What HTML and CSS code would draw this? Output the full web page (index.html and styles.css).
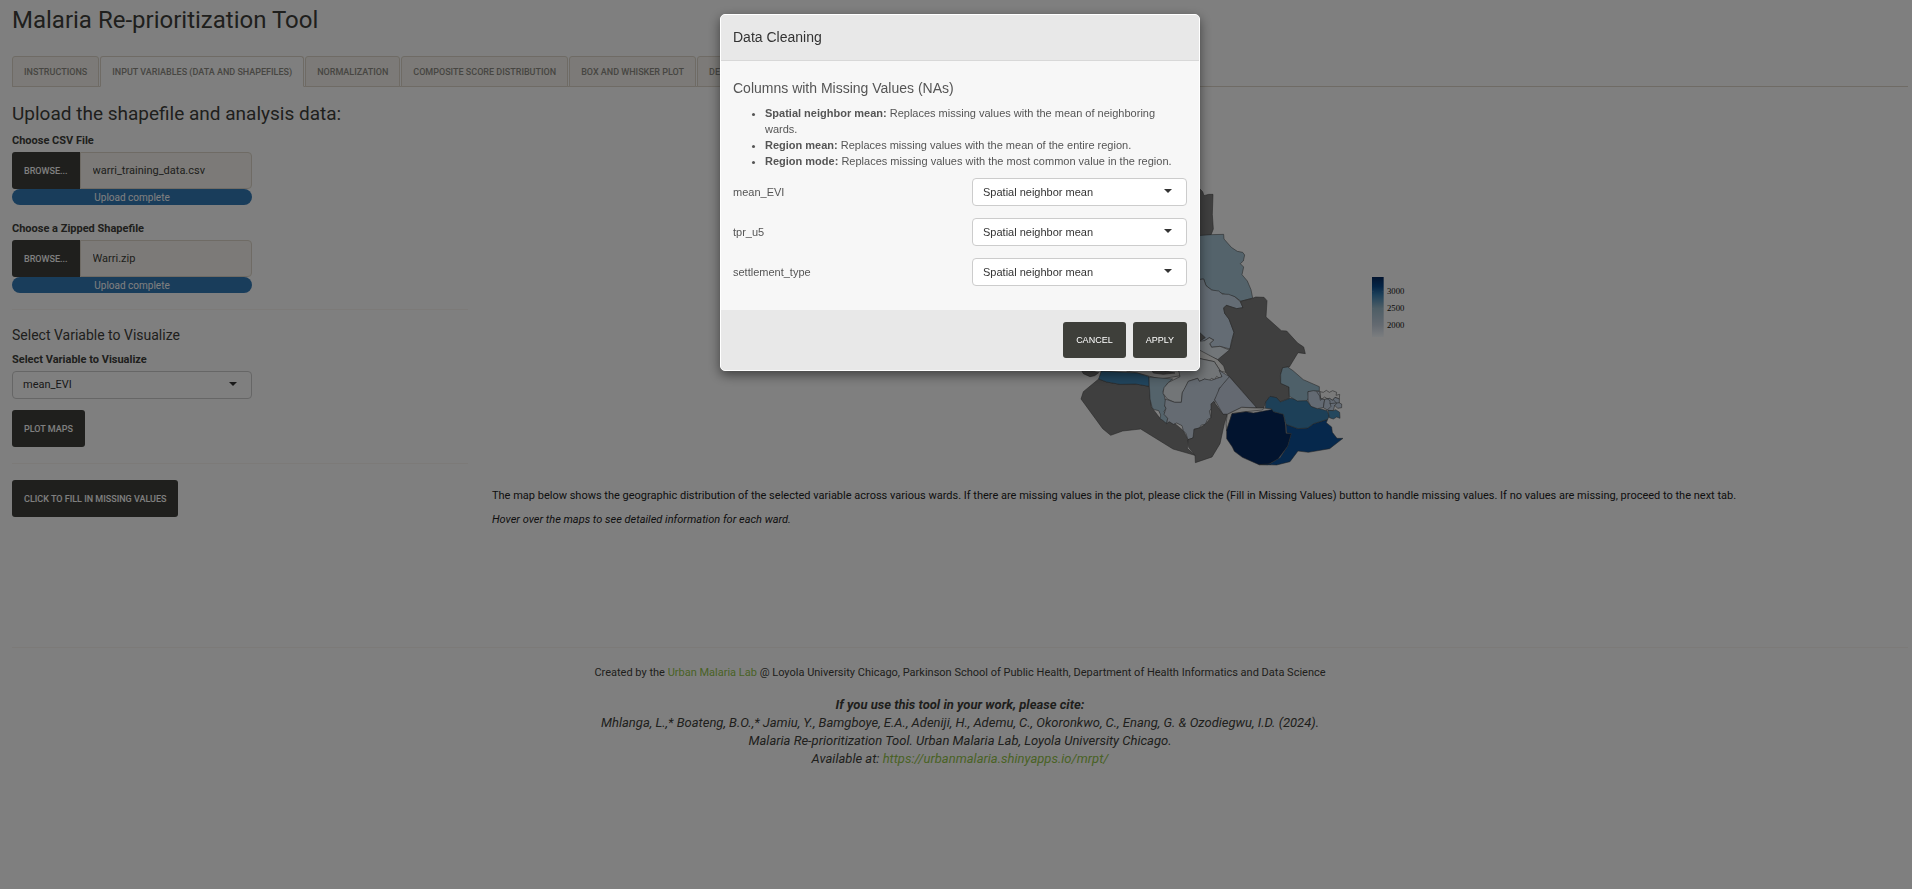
FILE: index.html
```html
<!DOCTYPE html>
<html lang="en">
<head>
<meta charset="utf-8">
<title>Malaria Re-prioritization Tool</title>
<link rel="stylesheet" href="styles.css">
</head>
<body>
<div class="page">
  <h1 class="title">Malaria Re-prioritization Tool</h1>
  <nav class="tabs">
    <a class="tab" href="#instructions">INSTRUCTIONS</a>
    <a class="tab active" href="#input">INPUT VARIABLES (DATA AND SHAPEFILES)</a>
    <a class="tab" href="#normalization">NORMALIZATION</a>
    <a class="tab" href="#composite">COMPOSITE SCORE DISTRIBUTION</a>
    <a class="tab" href="#box">BOX AND WHISKER PLOT</a>
    <a class="tab" href="#de">DE</a>
  </nav>
  <div class="columns">
    <section class="sidebar">
      <h2 class="section-title">Upload the shapefile and analysis data:</h2>
      <div class="upload">
        <label class="label" for="csv">Choose CSV File</label>
        <div class="file">
          <button class="btn browse" type="button">BROWSE...</button>
          <input class="file-name" id="csv" type="text" value="warri_training_data.csv" readonly>
        </div>
        <div class="progress">Upload complete</div>
      </div>
      <div class="upload">
        <label class="label" for="shp">Choose a Zipped Shapefile</label>
        <div class="file">
          <button class="btn browse" type="button">BROWSE...</button>
          <input class="file-name" id="shp" type="text" value="Warri.zip" readonly>
        </div>
        <div class="progress">Upload complete</div>
      </div>
      <hr class="rule">
      <h3 class="sub-title">Select Variable to Visualize</h3>
      <label class="label" for="variable">Select Variable to Visualize</label>
      <div class="picker narrow">
        <select class="select" id="variable"><option>mean_EVI</option></select>
      </div>
      <button class="btn" type="button">PLOT MAPS</button>
      <hr class="rule">
      <button class="btn" type="button">CLICK TO FILL IN MISSING VALUES</button>
    </section>
    <section class="main">
      <svg class="map" viewBox="0 0 1080 930" role="img" aria-label="Map of mean_EVI by ward">
        <defs>
          <linearGradient id="scale" x1="0" y1="0" x2="0" y2="1">
            <stop offset="0" stop-color="#06295f"/>
            <stop offset=".16" stop-color="#0a4a8c"/>
            <stop offset=".3" stop-color="#3c82b4"/>
            <stop offset=".52" stop-color="#9cbccc"/>
            <stop offset=".8" stop-color="#c8d4e2"/>
            <stop offset="1" stop-color="#f7fbff"/>
          </linearGradient>
        </defs>
        <g class="wards">
          <path fill="#7f7f7f" d="M380 60L420 54L428 62L432 74L446 70L459 70L457 130L460 174L453 192L380 200Z"/>
          <path fill="#a8c6d6" d="M380 196L453 191L491 190L492 204L514 229L532 241L548 244L554 252L550 270L541 278L551 288L546 311L562 330L573 356L578 381L543 391L524 377L494 370L455 357L438 344L431 324L380 330Z"/>
          <path fill="#c8d8e8" d="M380 330L431 324L438 344L455 357L476 360L487 369L506 370L524 377L541 392L549 410L530 413L499 403L491 411L494 427L507 444L522 484L514 512L510 534L480 526L455 529L449 518L461 507L448 500L434 509L380 540Z"/>
          <path fill="#7f7f7f" d="M541 391L578 382L587 378L612 379L621 389L618 438L664 479L680 480L713 516L731 528L736 548L714 545L688 588L668 590L661 614L662 637L687 648L688 682L660 692L650 681L630 676L617 693L611 711L590 713L546 659L508 617L497 604L473 566L510 534L522 484L507 444L494 427L491 411L499 403L530 413L549 410Z"/>
          <path fill="#7f7f7f" d="M410 476L436 500L410 516Z"/>
          <path fill="#e4ecf2" d="M380 516L434 509L448 500L461 507L449 518L455 529L480 526L508 537L473 566L380 525Z"/>
          <path fill="#f0f0ee" d="M200 600L380 540L420 538L473 566L491 585L497 604L481 600L463 572L420 563L350 580L362 614L300 624L232 606Z"/>
          <path fill="#7f7f7f" d="M60 590L116 605L104 614L90 617L70 608Z"/>
          <path fill="#7f7f7f" d="M270 590L345 606L310 610L280 606Z"/>
          <path fill="#7f7f7f" d="M116 624L140 633L180 640L227 639L267 646L274 707L285 722L300 742L318 751L345 758L370 779L384 806L382 832L405 853L339 834L242 774L188 780L152 793L128 773L63 684L70 662Z"/>
          <path fill="#448cbc" d="M124 600L232 606L267 617L267 646L227 639L180 640L140 633L116 624Z"/>
          <path fill="#a8c6d6" d="M267 618L338 624L323 636L309 660L316 687L320 696L314 704L318 712L312 722L320 734L323 742L320 758L314 753L308 748L300 743L302 732L296 719L284 716L277 712L270 684Z"/>
          <path fill="#e4eaee" d="M350 570L420 563L463 572L481 600L486 617L478 622L470 616L464 626L454 622L446 630L434 624L426 628L418 631L413 622L385 631L374 655L367 665L364 694L344 694L322 684L309 667L312 650L326 634L360 617Z"/>
          <path fill="#cad6e4" d="M316 684L344 694L364 694L367 665L385 631L413 622L418 631L434 624L454 628L486 617L477 598L510 618L494 634L490 646L478 651L476 668L464 686L466 694L454 698L455 712L448 720L453 740L442 746L436 760L424 762L418 771L402 775L405 790L399 801L384 806L378 788L370 779L366 764L350 756L340 760L328 752L320 758L323 742L312 730L318 712L314 704Z"/>
          <path fill="#c8d2e2" d="M508 617L548 663L590 710L545 709L502 730L489 730L464 686L478 653L490 638Z"/>
          <path fill="#7f7f7f" d="M461 691L489 730L502 730L493 758L480 818L456 858L406 875L405 853L386 829L384 806L399 801L402 775L418 771L436 760L453 740L453 700Z"/>
          <path fill="#f0f0ee" d="M498 758L502 730L545 709L590 711L614 711L606 717L558 722L516 728L500 780Z"/>
          <path fill="#05285f" d="M516 728L558 722L580 726L638 715L640 722L670 730L676 760L678 787L694 788L683 826L654 864L624 881L597 881L547 859L523 841L517 828L500 803L500 778Z"/>
          <path fill="#0c5098" d="M678 760L714 773L743 771L761 758L803 745L799 755L815 768L817 784L831 802L849 802L809 833L745 844L714 840L690 872L650 882L597 881L630 878L660 860L683 826L694 788L680 785Z"/>
          <path fill="#3a80b0" d="M617 693L630 676L650 680L661 693L690 682L741 689L753 706L771 711L801 719L808 735L803 745L761 758L743 771L714 773L678 760L670 730L640 722L634 713L616 712Z"/>
          <path fill="#9cc0d2" d="M668 590L683 588L699 599L730 626L778 647L778 660L744 662L746 681L741 689L712 690L688 676L687 648L662 637L662 610Z"/>
          <path fill="#c6d4e6" d="M744 662L760 659L780 662L782 682L794 685L790 710L772 713L753 706L744 690Z"/>
          <path fill="#f4f4f4" d="M780 662L790 664L799 658L808 664L818 659L830 664L828 673L839 670L838 684L825 679L818 688L808 682L794 686L782 682Z"/>
          <path fill="#c6d4e6" d="M794 685L808 682L818 688L825 679L838 684L838 696L845 699L845 710L833 712L824 703L820 719L804 718L790 710Z"/>
          <path fill="#4b90bd" d="M804 718L820 719L827 716L839 724L840 742L830 738L820 744L808 740Z"/>
          <path fill="none" d="M770 662L779 675L781 688L794 678L810 689L810 698L838 695M810 697L813 706L801 718M820 686L830 697L824 704"/>
        </g>
        <rect x="936" y="318" width="35" height="180" fill="url(#scale)"/>
        <path class="ticks" d="M936 361H942M965 361H971M936 412H942M965 412H971M936 462H942M965 462H971"/>
        <g class="scale-text">
          <text x="981" y="369">3000</text>
          <text x="981" y="420">2500</text>
          <text x="981" y="471">2000</text>
        </g>
      </svg>
      <p class="note">The map below shows the geographic distribution of the selected variable across various wards. If there are missing values in the plot, please click the (Fill in Missing Values) button to handle missing values. If no values are missing, proceed to the next tab.</p>
      <p class="note"><em>Hover over the maps to see detailed information for each ward.</em></p>
    </section>
  </div>
  <footer class="footer">
    <p class="credit">Created by the <a class="link" href="#lab">Urban Malaria Lab</a> @ Loyola University Chicago, Parkinson School of Public Health, Department of Health Informatics and Data Science</p>
    <p class="cite"><strong>If you use this tool in your work, please cite:</strong><br>Mhlanga, L.,* Boateng, B.O.,* Jamiu, Y., Bamgboye, E.A., Adeniji, H., Ademu, C., Okoronkwo, C., Enang, G. &amp; Ozodiegwu, I.D. (2024).<br>Malaria Re-prioritization Tool. Urban Malaria Lab, Loyola University Chicago.<br>Available at: <a class="link" href="#mrpt">https://urbanmalaria.shinyapps.io/mrpt/</a></p>
  </footer>
</div>
<div class="backdrop">
  <div class="modal" role="dialog" aria-labelledby="modal-title">
    <header class="modal-head"><h2 class="modal-title" id="modal-title">Data Cleaning</h2></header>
    <div class="modal-body">
      <h3 class="modal-sub">Columns with Missing Values (NAs)</h3>
      <ul class="methods">
        <li><strong>Spatial neighbor mean:</strong> Replaces missing values with the mean of neighboring wards.</li>
        <li><strong>Region mean:</strong> Replaces missing values with the mean of the entire region.</li>
        <li><strong>Region mode:</strong> Replaces missing values with the most common value in the region.</li>
      </ul>
      <div class="fields">
        <label for="evi">mean_EVI</label>
        <div class="picker"><select class="select" id="evi"><option>Spatial neighbor mean</option></select></div>
        <label for="tpr">tpr_u5</label>
        <div class="picker"><select class="select" id="tpr"><option>Spatial neighbor mean</option></select></div>
        <label for="settlement">settlement_type</label>
        <div class="picker"><select class="select" id="settlement"><option>Spatial neighbor mean</option></select></div>
      </div>
    </div>
    <footer class="modal-foot">
      <button class="btn" type="button">CANCEL</button>
      <button class="btn" type="button">APPLY</button>
    </footer>
  </div>
</div>
</body>
</html>
```
FILE: styles.css
```css
* { box-sizing: border-box; }
body {
  margin: 0;
  background: #fff;
  color: #3e3f3a;
  font: 11px/16px Roboto, sans-serif;
}
h1, h2, h3, p, ul { margin: 0; font-weight: 400; }
button, input, select { font: inherit; color: inherit; }
.page { padding: 4px 4px 0 12px; }
.title { font-size: 24px; line-height: 32px; }

.tabs {
  display: flex;
  gap: 1px;
  margin-top: 20px;
  border-bottom: 1px solid #dfd7ca;
}
.tab {
  padding: 8px 11px 7px;
  margin-bottom: -1px;
  border: 1px solid #dfd7ca;
  border-radius: 3px 3px 0 0;
  background: #f8f5f0;
  color: #8e8c84;
  font-size: 9px;
  font-weight: 500;
  line-height: 14px;
  text-decoration: none;
}
.tab.active { background: #fff; border-bottom-color: #fff; }

.columns {
  display: grid;
  grid-template-columns: 456px 1fr;
  column-gap: 24px;
}
.section-title { margin-top: 15px; font-size: 19px; line-height: 24px; }
.label { display: block; margin: 7px 0 3px; font-weight: 700; }
.upload { margin-bottom: 16px; width: 240px; }
.file { display: flex; }
.btn {
  height: 37px;
  padding: 0 12px;
  border: 0;
  border-radius: 3px;
  background: #3e3f3a;
  color: #fff;
  font-size: 9px;
  font-weight: 500;
}
.browse { border-radius: 3px 0 0 3px; }
.file-name {
  flex: 1;
  min-width: 0;
  padding: 0 12px;
  border: 1px solid #dfd7ca;
  border-radius: 0 4px 4px 0;
  background: #f8f5f0;
}
.progress {
  height: 16px;
  border-radius: 8px;
  background: #337ab7;
  color: #fff;
  font-size: 10px;
  line-height: 17px;
  text-align: center;
}
.rule { margin: 16px 0; border: 0; border-top: 1px solid #f8f5f0; }
.upload + .rule { margin-top: 15px; }
.sub-title { font-size: 14px; line-height: 19px; }
.picker { position: relative; }
.picker::after {
  content: "";
  position: absolute;
  top: 11px;
  right: 15px;
  border: 4px solid transparent;
  border-top-color: #333;
  border-bottom-width: 0;
  pointer-events: none;
}
.narrow { width: 240px; margin-bottom: 11px; }
.select {
  display: block;
  width: 100%;
  height: 28px;
  padding: 0 10px;
  border: 1px solid #ccc;
  border-radius: 4px;
  background: #fff;
  color: #333;
  appearance: none;
}
.map { display: block; width: 360px; margin: 84px 0 7px 568px; }
.wards { stroke: #444; stroke-opacity: .8; stroke-width: 2; stroke-linejoin: round; }
.ticks { stroke: #dde; stroke-width: 1; opacity: .4; }
.scale-text { fill: #111; font: 26px "Liberation Serif", serif; }
.note { margin-bottom: 8px; color: #222; }

.footer {
  margin-top: 111px;
  padding-top: 17px;
  border-top: 1px solid #f8f5f0;
  text-align: center;
}
.cite {
  margin-top: 15px;
  font-size: 13px;
  font-style: italic;
  line-height: 18px;
}
.link { color: #93c54b; text-decoration: none; }

.backdrop {
  position: fixed;
  inset: 0;
  padding: 14px 0 0 8px;
  background: rgba(0, 0, 0, .5);
}
.modal {
  width: 480px;
  margin: 0 auto;
  overflow: hidden;
  border: 1px solid #fff;
  border-radius: 5px;
  background: #f7f7f7;
  box-shadow: 0 4px 12px rgba(0, 0, 0, .5);
  color: #555;
  font-family: "Liberation Sans", sans-serif;
}
.modal-head {
  padding: 12px;
  border-bottom: 1px solid #d8d8d8;
  background: #e8e8e8;
  color: #333;
}
.modal-title, .modal-sub { font-size: 14px; line-height: 21px; }
.modal-body { padding: 17px 12px 24px; }
.methods { margin: 6px 0 9px; padding-left: 32px; }
.fields {
  display: grid;
  grid-template-columns: 1fr 215px;
  align-items: center;
  row-gap: 12px;
}
.modal-foot {
  display: flex;
  justify-content: flex-end;
  gap: 7px;
  padding: 12px;
  background: #e8e8e8;
}
.modal-foot .btn { height: 36px; padding: 0 13px; font-weight: 400; }
```
